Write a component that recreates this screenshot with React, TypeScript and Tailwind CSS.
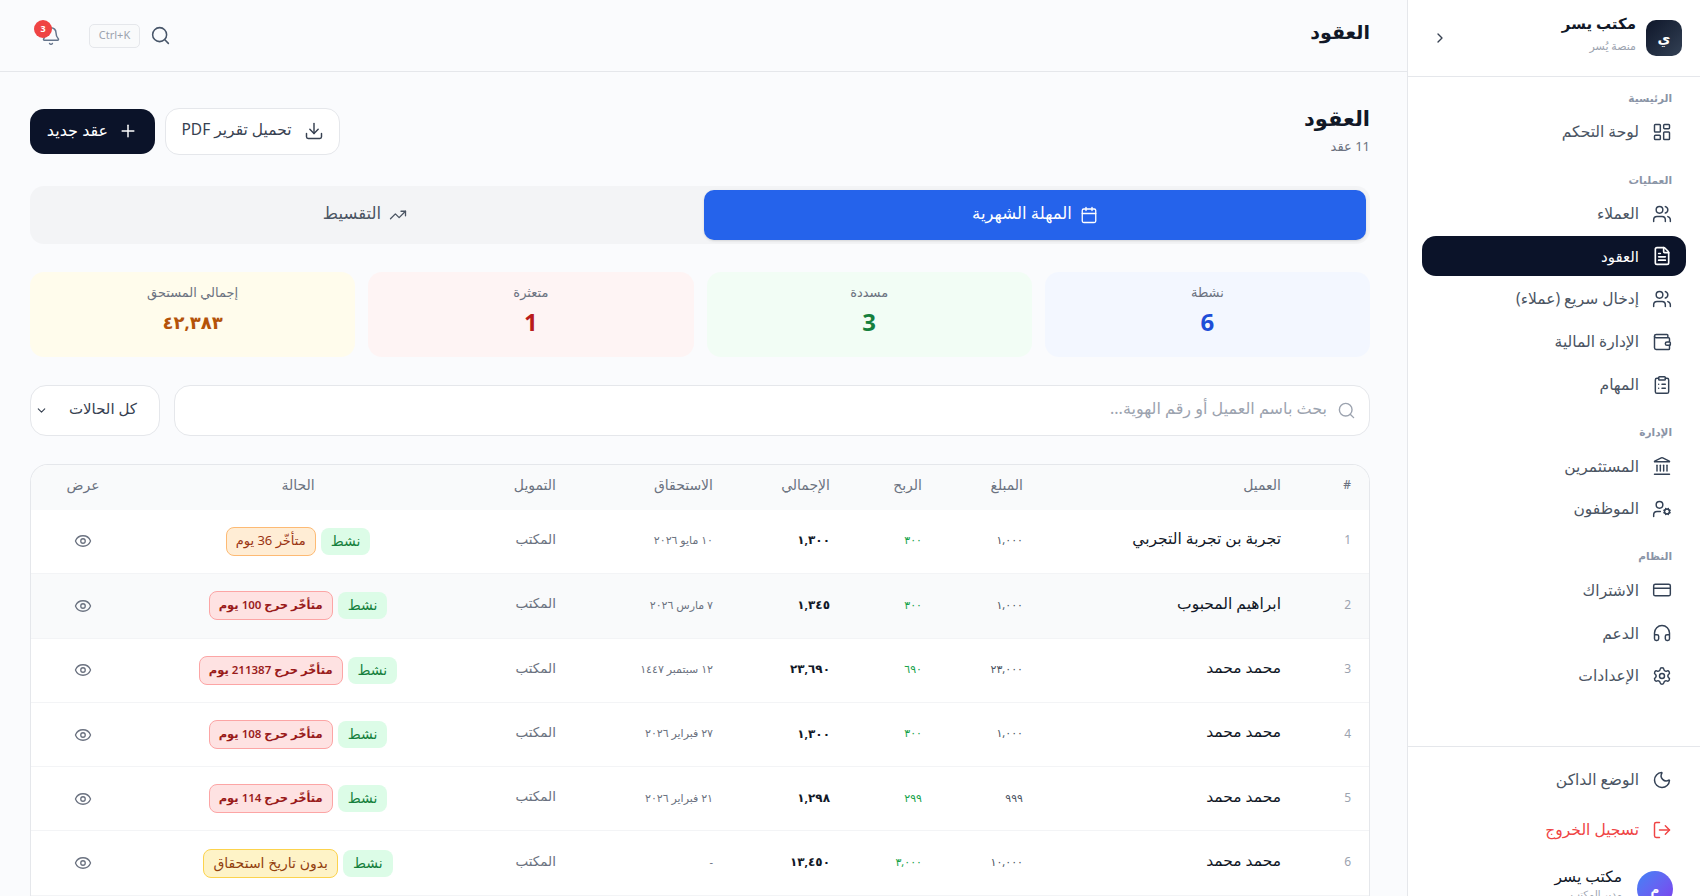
import React from 'react'
import {
  Bell,
  Calendar,
  ChevronDown,
  ChevronRight,
  ClipboardList,
  CreditCard,
  Download,
  Eye,
  FileText,
  Headphones,
  Landmark,
  LayoutDashboard,
  LogOut,
  Moon,
  Plus,
  Search,
  Settings,
  TrendingUp,
  UserCog,
  Users,
  Wallet,
} from 'lucide-react'

const navSections = [
  { title: 'الرئيسية', items: [{ label: 'لوحة التحكم', icon: LayoutDashboard }] },
  {
    title: 'العمليات',
    items: [
      { label: 'العملاء', icon: Users },
      { label: 'العقود', icon: FileText, active: true },
      { label: 'إدخال سريع (عملاء)', icon: Users },
      { label: 'الإدارة المالية', icon: Wallet },
      { label: 'المهام', icon: ClipboardList },
    ],
  },
  {
    title: 'الإدارة',
    items: [
      { label: 'المستثمرين', icon: Landmark },
      { label: 'الموظفون', icon: UserCog },
    ],
  },
  {
    title: 'النظام',
    items: [
      { label: 'الاشتراك', icon: CreditCard },
      { label: 'الدعم', icon: Headphones },
      { label: 'الإعدادات', icon: Settings },
    ],
  },
]

const stats = [
  { label: 'نشطة', value: '6', box: 'bg-[#f3f7ff]', text: 'text-[#1d4ed8] text-[24px]' },
  { label: 'مسددة', value: '3', box: 'bg-[#f2fdf5]', text: 'text-[#15803d] text-[24px]' },
  { label: 'متعثرة', value: '1', box: 'bg-[#fef4f4]', text: 'text-[#b91c1c] text-[24px]' },
  { label: 'إجمالي المستحق', value: '٤٢,٣٨٣', box: 'bg-[#fffcec]', text: 'text-[#b45309] text-[18px]' },
]

const overdue = 'border-[#fca5a5] bg-[#fee2e2] text-[#991b1b] text-[11.5px] font-semibold'
const late = 'border-[#fdba74] bg-[#ffedd5] text-[#9a3412] text-[13px]'
const noDate = 'border-[#fcd34d] bg-[#fef3c7] text-[#92400e] text-[14px]'

const rows = [
  { id: 1, name: 'تجربة بن تجربة التجربي', amount: '١,٠٠٠', profit: '٣٠٠', total: '١,٣٠٠', due: '١٠ مايو ٢٠٢٦', badge: 'متأخّر 36 يوم', tone: late },
  { id: 2, name: 'ابراهيم المحبوب', amount: '١,٠٠٠', profit: '٣٠٠', total: '١,٣٤٥', due: '٧ مارس ٢٠٢٦', badge: 'متأخّر حرج 100 يوم', tone: overdue },
  { id: 3, name: 'محمد محمد', amount: '٢٣,٠٠٠', profit: '٦٩٠', total: '٢٣,٦٩٠', due: '١٢ سبتمبر ١٤٤٧', badge: 'متأخّر حرج 211387 يوم', tone: overdue },
  { id: 4, name: 'محمد محمد', amount: '١,٠٠٠', profit: '٣٠٠', total: '١,٣٠٠', due: '٢٧ فبراير ٢٠٢٦', badge: 'متأخّر حرج 108 يوم', tone: overdue },
  { id: 5, name: 'محمد محمد', amount: '٩٩٩', profit: '٢٩٩', total: '١,٢٩٨', due: '٢١ فبراير ٢٠٢٦', badge: 'متأخّر حرج 114 يوم', tone: overdue },
  { id: 6, name: 'محمد محمد', amount: '١٠,٠٠٠', profit: '٣,٠٠٠', total: '١٣,٤٥٠', due: '-', badge: 'بدون تاريخ استحقاق', tone: noDate },
]

function Sidebar() {
  return (
    <aside className="flex h-full w-[293px] shrink-0 flex-col border-l border-[#e5e7eb] bg-white">
      <div className="flex h-[77px] shrink-0 items-center justify-between border-b border-[#e5e7eb] pl-[24px] pr-[18px]">
        <div className="flex items-center gap-[10px]">
          <div className="flex h-[36px] w-[36px] items-center justify-center rounded-[10px] bg-gradient-to-br from-[#0f172a] to-[#334155] text-sm font-bold text-white">ي</div>
          <div className="-mt-[9px]">
            <div className="text-[15px] font-bold leading-5 text-[#111827]">مكتب يسر</div>
            <div className="mt-[5px] text-[11px] leading-4 text-[#9ca3af]">منصة يُسر</div>
          </div>
        </div>
        <ChevronRight className="h-4 w-4 text-[#374151]" />
      </div>
      <nav className="flex-1 px-[14px] pt-[13px]">
        {navSections.map((section) => (
          <div key={section.title} className="mb-[19.5px]">
            <div className="mb-[6px] h-[16px] px-[14px] text-[10.5px] font-semibold leading-4 text-[#8a94a6]">{section.title}</div>
            <div className="flex flex-col gap-[2.8px]">
              {section.items.map((item) => (
                <div
                  key={item.label}
                  className={
                    item.active
                      ? 'flex h-[40px] items-center gap-[13px] rounded-[14px] bg-[#0b1329] px-[14px] text-[15px] font-medium text-white'
                      : 'flex h-[40px] items-center gap-[13px] rounded-[14px] px-[14px] text-[15.5px] text-[#4b5563]'
                  }
                >
                  <item.icon className={item.active ? 'h-[20px] w-[20px] text-white' : 'h-[20px] w-[20px] text-[#334155]'} strokeWidth={item.active ? 2 : 1.75} />
                  <span>{item.label}</span>
                </div>
              ))}
            </div>
          </div>
        ))}
      </nav>
      <div className="h-[150px] shrink-0 border-t border-[#e5e7eb] px-[14px] pt-[13px]">
        <div className="flex h-[40px] items-center gap-[13px] px-[14px] text-[15.5px] text-[#4b5563]">
          <Moon className="h-[20px] w-[20px] text-[#334155]" strokeWidth={1.75} />
          <span>الوضع الداكن</span>
        </div>
        <div className="mt-[10px] flex h-[40px] items-center gap-[13px] px-[14px] text-[15.5px] text-[#ef4444]">
          <LogOut className="h-[20px] w-[20px]" strokeWidth={1.75} />
          <span>تسجيل الخروج</span>
        </div>
        <div className="mt-[21px] flex items-start gap-[15px] px-[13px]">
          <div className="flex h-[36px] w-[36px] shrink-0 items-center justify-center rounded-full bg-gradient-to-br from-[#3b82f6] to-[#7c3aed] text-xs font-semibold text-white">م</div>
          <div className="-mt-[5px]">
            <div className="text-[15.5px] font-medium leading-5 text-[#111827]">مكتب يسر</div>
            <div className="text-[10px] leading-4 text-[#9ca3af]">مدير المكتب</div>
          </div>
        </div>
      </div>
    </aside>
  )
}

function StatusTable() {
  return (
    <div className="overflow-hidden rounded-t-[18px] border border-b-0 border-[#e5e7eb] bg-white">
      <table className="w-full table-fixed border-collapse">
        <colgroup>
          <col className="w-[72px]" />
          <col className="w-[258px]" />
          <col className="w-[101px]" />
          <col className="w-[92px]" />
          <col className="w-[117px]" />
          <col className="w-[157px]" />
          <col className="w-[111px]" />
          <col className="w-[326px]" />
          <col className="w-[104px]" />
        </colgroup>
        <thead>
          <tr className="h-[44.5px] bg-[#f9fafb] text-[14px] text-[#6b7280]">
            <th className="pb-[4px] pr-[18px] text-right text-[12px] font-medium">#</th>
            <th className="px-4 pb-[5px] text-right font-normal">العميل</th>
            <th className="px-4 pb-[5px] text-right font-normal">المبلغ</th>
            <th className="px-4 pb-[5px] text-right font-normal">الربح</th>
            <th className="px-4 pb-[5px] text-right font-normal">الإجمالي</th>
            <th className="px-4 pb-[5px] text-right font-normal">الاستحقاق</th>
            <th className="px-4 pb-[5px] text-right font-normal">التمويل</th>
            <th className="px-4 pb-[5px] text-center font-normal">الحالة</th>
            <th className="px-4 pb-[5px] text-center font-normal">عرض</th>
          </tr>
        </thead>
        <tbody>
          {rows.map((row) => (
            <tr key={row.id} className={row.id === 2 ? 'h-[64.3px] border-b border-[#f3f4f6] bg-[#f9fafb]' : 'h-[64.3px] border-b border-[#f3f4f6]'}>
              <td className="pb-[2px] pr-[18px] text-right text-[12px] text-[#9ca3af]">{row.id}</td>
              <td className="px-4 pb-[5px] text-[15.5px] font-medium text-[#111827]">{row.name}</td>
              <td className="px-4 pb-[2px] text-[11px] text-[#4b5563]">{row.amount}</td>
              <td className="px-4 pb-[2px] text-[11px] text-[#16a34a]">{row.profit}</td>
              <td className="px-4 pb-[2px] text-[12px] font-bold text-[#111827]">{row.total}</td>
              <td className="px-4 pb-[2px] text-[11px] text-[#6b7280]">{row.due}</td>
              <td className="px-4 pb-[5px] text-[13.5px] text-[#6b7280]">المكتب</td>
              <td className="px-4">
                <div className="flex items-center justify-center gap-[5px]">
                  <span className="flex h-[27px] items-center rounded-[8px] bg-[#dcfce7] px-[10px] pb-[2px] text-[14px] text-[#15803d]">نشط</span>
                  <span className={'flex h-[29px] items-center rounded-[8px] border px-[9px] pb-[2px] ' + row.tone}>{row.badge}</span>
                </div>
              </td>
              <td className="px-4">
                <Eye className="mx-auto h-[18px] w-[18px] text-[#6b7280]" strokeWidth={1.75} />
              </td>
            </tr>
          ))}
        </tbody>
      </table>
    </div>
  )
}

export default function App() {
  return (
    <div dir="rtl" className="flex h-screen w-full overflow-hidden bg-[#fafbfd] font-['Noto_Sans','DejaVu_Sans',sans-serif]">
      <Sidebar />
      <main className="min-w-0 flex-1 overflow-hidden">
        <header className="flex h-[72px] items-center justify-between border-b border-[#e5e7eb] pl-[41px] pr-[37px]">
          <h1 className="-mt-[6px] text-[19px] font-bold text-[#111827]">العقود</h1>
          <div className="flex items-center gap-[28px]">
            <div className="flex items-center gap-[10px]">
              <Search className="h-[21px] w-[21px] text-[#475569]" strokeWidth={1.75} />
              <div className="flex h-[24px] w-[51px] items-center justify-center rounded-[5px] border border-[#e5e7eb] bg-[#f9fafb] text-[11px] text-[#9ca3af]">Ctrl+K</div>
            </div>
            <div className="relative">
              <Bell className="h-[20px] w-[20px] text-[#64748b]" strokeWidth={1.75} />
              <span className="absolute -left-[7px] -top-[6px] flex h-[18px] w-[18px] items-center justify-center rounded-full bg-[#ef4444] text-[9px] font-bold text-white">3</span>
            </div>
          </div>
        </header>

        <div className="pl-[30px] pr-[37px] pt-[34px]">
          <div className="flex h-[50px] items-center justify-between">
            <div>
              <h2 className="-mt-[3px] text-[21px] font-bold leading-7 text-[#111827]">العقود</h2>
              <p className="mt-[4px] text-[13px] leading-5 text-[#6b7280]">11 عقد</p>
            </div>
            <div className="flex items-center gap-[10px]">
              <button type="button" className="flex h-[47px] w-[175px] items-center justify-center gap-[12px] rounded-[14px] border border-[#e5e7eb] bg-white text-[15.5px] text-[#374151]">
                <Download className="h-[20px] w-[20px]" strokeWidth={1.75} />
                <span className="-mt-[3px]">تحميل تقرير PDF</span>
              </button>
              <button type="button" className="flex h-[45px] w-[125px] items-center justify-center gap-[10px] rounded-[14px] bg-[#0b1329] text-[16px] text-white">
                <Plus className="h-[20px] w-[20px]" strokeWidth={1.75} />
                <span className="-mt-[3px]">عقد جديد</span>
              </button>
            </div>
          </div>

          <div className="mt-[30px] flex h-[58px] items-center gap-[8px] rounded-[14px] bg-[#f3f4f6] p-[4px]">
            <div className="flex h-[50px] flex-1 items-center justify-center gap-[8px] rounded-[10px] bg-[#2563eb] text-[16.5px] font-medium text-white shadow-sm">
              <Calendar className="h-[18px] w-[18px]" strokeWidth={1.75} />
              <span className="-mt-[3px]">المهلة الشهرية</span>
            </div>
            <div className="flex h-[50px] flex-1 items-center justify-center gap-[8px] text-[16.5px] text-[#4b5563]">
              <TrendingUp className="h-[18px] w-[18px]" strokeWidth={1.75} />
              <span className="-mt-[3px]">التقسيط</span>
            </div>
          </div>

          <div className="mt-[28px] grid grid-cols-4 gap-[13px]">
            {stats.map((stat) => (
              <div key={stat.label} className={'flex h-[85px] flex-col items-center rounded-[14px] pt-[10px] ' + stat.box}>
                <div className="text-[13px] leading-5 text-[#6b7280]">{stat.label}</div>
                <div className={'mt-[4px] font-bold leading-8 ' + stat.text}>{stat.value}</div>
              </div>
            ))}
          </div>

          <div className="mt-[28px] flex gap-[14px]">
            <div className="flex h-[51px] flex-1 items-center gap-[10px] rounded-[16px] border border-[#e5e7eb] bg-white px-[13px] text-[16px] text-[#9ca3af]">
              <Search className="h-[19px] w-[19px] text-[#9ca3af]" strokeWidth={1.75} />
              <span className="-mt-[5px]">بحث باسم العميل أو رقم الهوية...</span>
            </div>
            <div className="flex h-[51px] w-[130px] items-center justify-between rounded-[16px] border border-[#e5e7eb] bg-white pl-[4px] pr-[22px] text-[15px] text-[#374151]">
              <span className="-mt-[4px]">كل الحالات</span>
              <ChevronDown className="h-[13px] w-[13px]" />
            </div>
          </div>

          <div className="mt-[28px]">
            <StatusTable />
          </div>
        </div>
      </main>
    </div>
  )
}
